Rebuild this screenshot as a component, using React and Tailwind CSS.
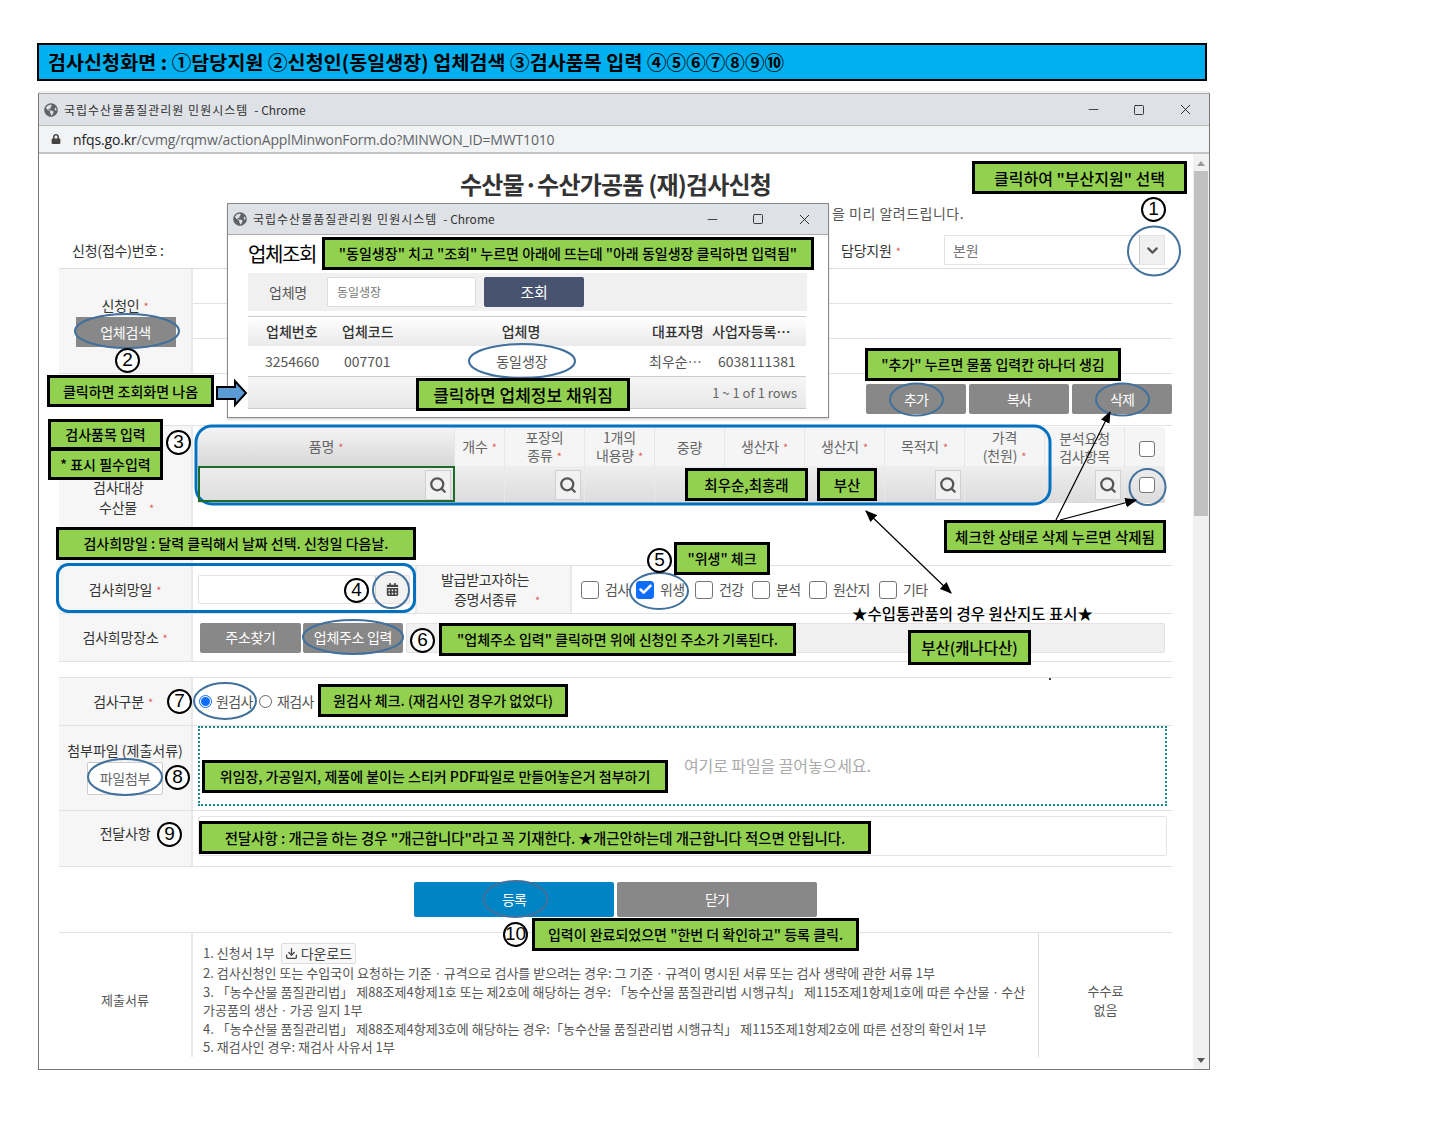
import React from 'react';
import { Search, ChevronDown, Check, Minus, X, Square, Download } from 'lucide-react';
import { FaGlobeAmericas, FaLock, FaCalendarAlt } from 'react-icons/fa';

const Req = () => <span className="ml-1 text-[11px] text-[#e0605a]">*</span>;

// green note boxes laid over the form
const Note = ({ className, children }) => (
  <div className={`absolute flex items-center justify-center whitespace-nowrap border-[3px] border-black bg-[#92d050] font-medium tracking-normal text-black ${className}`}>
    {children}
  </div>
);

// circled step number
const Num = ({ className, children }) => (
  <div className={`absolute flex h-[25px] w-[25px] items-center justify-center rounded-full border-2 border-black bg-white font-['Liberation_Sans',sans-serif] text-[19px] tracking-normal text-black ${className}`}>
    {children}
  </div>
);

const Label = ({ className = '', children }) => (
  <div className={`flex w-[134px] shrink-0 flex-col items-center justify-center border-r-2 border-[#e8e8e8] bg-[#f6f6f6] text-center text-[14px] tracking-[-0.2px] text-[#333] ${className}`}>
    {children}
  </div>
);

const SearchBtn = ({ className = '' }) => (
  <div className={`flex h-[30px] w-[26px] items-center justify-center border border-[#d0d0d0] bg-[#f1f1f1] ${className}`}>
    <Search size={18} strokeWidth={3} className="text-[#555]" />
  </div>
);

const Box = ({ checked, className = 'h-[18px] w-[18px]' }) => (
  <div className={`flex shrink-0 items-center justify-center rounded-[3px] border ${className} ${checked ? 'border-[#0d6efd] bg-[#0d6efd]' : 'border-[#777] bg-white'}`}>
    {checked && <Check size={15} strokeWidth={4} className="text-white" />}
  </div>
);

const WinButtons = ({ gap }) => (
  <div className={`flex items-center text-[#111] ${gap}`}>
    <Minus size={15} strokeWidth={1.2} />
    <Square size={12} strokeWidth={1.6} />
    <X size={17} strokeWidth={1.2} />
  </div>
);

const WinTitle = () => (
  <div className="flex items-center gap-[6px] text-[12px] text-[#333]">
    <FaGlobeAmericas size={14} className="text-[#5f6368]" />
    <span className="tracking-[1px]">국립수산물품질관리원 민원시스템</span>
    <span className="tracking-[0px]">- Chrome</span>
  </div>
);

const columns = [
  { w: 'w-[257px]', text: <>품명<Req /></>, bg: 'bg-gradient-to-b from-[#f4f4f4] to-[#d8d8d8]', search: 'last' },
  { w: 'w-[50px]', text: <>개수<Req /></> },
  { w: 'w-[80px]', text: <>포장의<br />종류<Req /></>, search: 'last' },
  { w: 'w-[70px]', text: <>1개의<br />내용량<Req /></> },
  { w: 'w-[70px]', text: '중량' },
  { w: 'w-[80px]', text: <>생산자<Req /></> },
  { w: 'w-[80px]', text: <>생산지<Req /></> },
  { w: 'w-[80px]', text: <>목적지<Req /></>, search: 'last' },
  { w: 'w-[80px]', text: <>가격<br />(천원)<Req /></> },
  { w: 'w-[80px]', text: <>분석요청<br />검사항목</>, search: 'last' },
];

const certs = [
  { name: '검사', w: 'w-[55px]' },
  { name: '위생', w: 'w-[59px]', checked: true },
  { name: '건강', w: 'w-[57px]' },
  { name: '분석', w: 'w-[57px]' },
  { name: '원산지', w: 'w-[70px]' },
  { name: '기타', w: 'w-[60px]' },
];

const App = () => {
  return (
    <div className="relative h-[1148px] w-[1437px] overflow-hidden bg-white pt-[43px] font-['Noto_Sans_CJK_KR',sans-serif] tracking-[-1px] text-[#333]">
      {/* heading bar */}
      <div className="ml-[37px] flex h-[38px] w-[1170px] items-center border-2 border-black bg-[#00b0f0] pl-[9px] text-[19.5px] font-bold tracking-[0.1px] whitespace-nowrap text-black">
        검사신청화면 : ①담당지원 ②신청인(동일생장) 업체검색 ③검사품목 입력 ④⑤⑥⑦⑧⑨⑩
      </div>

      {/* browser window */}
      <div className="mt-[12px] ml-[38px] flex h-[977px] w-[1172px] flex-col border border-[#777] border-t-[#aaa] bg-white shadow-[0_-2px_0_#eeeeee]">
        <div className="flex h-[32px] shrink-0 items-center justify-between border-b border-[#bbb] bg-[#dee1e6] pr-[15px] pl-[5px]">
          <WinTitle />
          <WinButtons gap="gap-[32px]" />
        </div>
        <div className="flex h-[28px] shrink-0 items-center gap-[12px] border-b-2 border-[#c4c4c4] bg-[#f1f3f4] pl-[12px] font-['Open_Sans',sans-serif] text-[14px] tracking-[-0.15px] text-[#5f6368]">
          <FaLock size={10} className="text-[#444]" />
          <span><span className="text-[#222]">nfqs.go.kr</span>/cvmg/rqmw/actionApplMinwonForm.do?MINWON_ID=MWT1010</span>
        </div>

        <div className="flex min-h-0 flex-1">
          <div className="flex w-[1154px] flex-col pr-[21px] pl-[20px]">
            <div className="flex h-[46px] shrink-0 items-end justify-center text-[24px] leading-[32px] font-semibold tracking-[-0.8px] text-[#333]">
              수산물·수산가공품 (재)검사신청
            </div>
            <div className="h-[32px] shrink-0 pt-[1px] pl-[773px] text-[14px] leading-[24px] tracking-[0.5px] text-[#555]">
              을 미리 알려드립니다.
            </div>
            <div className="flex h-[36px] shrink-0 items-center text-[14px] tracking-[-0.2px] text-[#333]">
              <div className="w-[782px] pl-[13px]">신청(접수)번호 :</div>
              <div className="w-[103px]">담당지원<Req /></div>
              <div className="flex h-[30px] w-[221px] items-center justify-between border border-[#e8e0e4] pl-[8px] text-[#777]">
                본원
                <div className="flex h-full w-[25px] items-center justify-center border-l border-[#ccc] bg-[#f0f0f0]">
                  <ChevronDown size={17} strokeWidth={3} className="text-[#555]" />
                </div>
              </div>
            </div>

            {/* applicant */}
            <div className="flex h-[105px] shrink-0 border-t border-[#ddd]">
              <Label className="justify-start pt-[26px]">
                <div className="h-[22px]">신청인<Req /></div>
                <div className="ml-[1px] flex h-[30px] w-[100px] items-center justify-center bg-[#888] text-white">업체검색</div>
              </Label>
              <div className="flex flex-1 flex-col">
                <div className="h-[35px] border-b border-[#e2e2e2]" />
                <div className="h-[35px] border-b border-[#e2e2e2]" />
                <div className="flex-1" />
              </div>
            </div>

            <div className="flex h-[52px] shrink-0 justify-end gap-[3px] border-t border-[#e2e2e2] pt-[10px] text-[14px] text-white">
              <div className="flex h-[30px] w-[100px] items-center justify-center rounded-[2px] bg-[#888]">추가</div>
              <div className="flex h-[30px] w-[100px] items-center justify-center rounded-[2px] bg-[#888]">복사</div>
              <div className="flex h-[30px] w-[100px] items-center justify-center rounded-[2px] bg-[#888]">삭제</div>
            </div>

            {/* inspected goods table */}
            <div className="flex h-[140px] shrink-0 border-t border-[#e2e2e2]">
              <Label className="items-start justify-end pb-[47px] pl-[34px] text-left leading-[20px]">
                <div>검사대상</div>
                <div className="pl-[6px]">수산물<span className="ml-3 text-[11px] text-[#e0605a]">*</span></div>
              </Label>
              <div className="w-[972px] pt-[1px] pl-[5px]">
                <div className="flex h-[39px] text-[14px] leading-[18px] tracking-[-0.2px] text-[#666]">
                  {columns.map((col, i) => (
                    <div key={i} className={`flex items-center justify-center border-r border-[#e6e6e6] text-center ${col.w} ${col.bg || 'bg-[#f5f5f5]'}`}>
                      <div>{col.text}</div>
                    </div>
                  ))}
                  <div className="flex w-[40px] items-center justify-center bg-[#f5f5f5] pt-[4px] pl-[4px]"><Box className="h-[16px] w-[16px]" /></div>
                </div>
                <div className="flex h-[37px] bg-gradient-to-b from-[#eeeeee] to-[#dcdcdc]">
                  {columns.map((col, i) => (
                    <div key={i} className={`flex items-center justify-end border-r border-[#e9e9e9] pr-[3px] ${col.w}`}>
                      {col.search && <SearchBtn />}
                    </div>
                  ))}
                  <div className="flex w-[40px] items-center justify-center pl-[4px]"><Box className="h-[16px] w-[16px]" /></div>
                </div>
              </div>
            </div>

            {/* desired date + certificate */}
            <div className="flex h-[48px] shrink-0 border-t border-[#e2e2e2]">
              <Label>
                <div>검사희망일<Req /></div>
              </Label>
              <div className="flex w-[222px] items-center pl-[5px]">
                <div className="flex h-[29px] w-[212px] justify-end rounded-[2px] border border-[#e8e0e4]">
                  <div className="flex w-[34px] items-center justify-center border-l border-[#ccc] bg-[#f2f2f2]">
                    <FaCalendarAlt size={13} className="text-[#444]" />
                  </div>
                </div>
              </div>
              <div className="flex w-[157px] flex-col justify-center gap-[2px] border-x-2 border-[#e8e8e8] bg-[#f6f6f6] pl-[24px] text-[14px] leading-[18px] tracking-[-0.3px]">
                <div>발급받고자하는</div>
                <div className="pl-[13px]">증명서종류<span className="ml-[18px] text-[11px] text-[#e0605a]">*</span></div>
              </div>
              <div className="flex flex-1 items-center pl-[9px] text-[14px] tracking-[-0.6px] text-[#555]">
                {certs.map((c) => (
                  <div key={c.name} className={`flex items-center gap-[6px] ${c.w}`}>
                    <Box checked={c.checked} />
                    <span>{c.name}</span>
                  </div>
                ))}
              </div>
            </div>

            {/* desired place */}
            <div className="flex h-[49px] shrink-0 border-y border-[#e2e2e2]">
              <Label>
                <div>검사희망장소<Req /></div>
              </Label>
              <div className="flex flex-1 items-center gap-[2px] pl-[7px] text-[14px] text-white">
                <div className="flex h-[30px] w-[101px] items-center justify-center rounded-[2px] bg-[#888] tracking-[-0.3px]">주소찾기</div>
                <div className="flex h-[30px] w-[100px] items-center justify-center rounded-[2px] bg-[#888] tracking-[-0.3px]">업체주소 입력</div>
                <div className="ml-[1px] h-[30px] w-[759px] rounded-[2px] border border-[#e8e0e4] bg-[#f0f0f0]" />
              </div>
            </div>
            <div className="h-[15px] shrink-0" />

            {/* inspection type */}
            <div className="flex h-[48px] shrink-0 border-t border-[#e2e2e2]">
              <Label className="pr-[4px]">
                <div>검사구분<Req /></div>
              </Label>
              <div className="flex items-center pl-[6px] text-[14px] tracking-[-0.6px] text-[#555]">
                <div className="flex h-[13px] w-[13px] items-center justify-center rounded-full border border-[#0d6efd]">
                  <div className="h-[9px] w-[9px] rounded-full bg-[#0d6efd]" />
                </div>
                <span className="ml-[4px] w-[43px]">원검사</span>
                <div className="h-[13px] w-[13px] rounded-full border border-[#666]" />
                <span className="ml-[5px]">재검사</span>
              </div>
            </div>

            {/* attachments */}
            <div className="flex h-[85px] shrink-0 border-t border-[#e2e2e2]">
              <Label className="justify-start pt-[14px]">
                <div className="leading-[20px] tracking-[0px]">첨부파일 (제출서류)</div>
                <div className="mt-[2px] flex h-[33px] w-[76px] items-center justify-center rounded-[2px] border border-[#ccc] bg-white text-[#666]">파일첨부</div>
              </Label>
              <div className="flex-1 pl-[5px]">
                <div className="flex h-[80px] w-[969px] items-center border-2 border-dotted border-[#1c8a92] pb-[3px] pl-[484px] text-[16px] tracking-[-0.1px] text-[#aaa]">
                  여기로 파일을 끌어놓으세요.
                </div>
              </div>
            </div>

            {/* message */}
            <div className="flex h-[56px] shrink-0 border-t border-[#e2e2e2]">
              <Label className="justify-start pt-[12px]">
                <div>전달사항</div>
              </Label>
              <div className="flex-1 pt-[5px] pl-[5px]">
                <div className="h-[40px] w-[969px] rounded-[3px] border border-[#e8e0e4]" />
              </div>
            </div>

            <div className="flex h-[66px] shrink-0 justify-center gap-[3px] border-t border-[#e2e2e2] pt-[15px] text-[14px] text-white">
              <div className="flex h-[35px] w-[200px] items-center justify-center rounded-[2px] bg-[#0084c4]">등록</div>
              <div className="flex h-[35px] w-[200px] items-center justify-center rounded-[2px] bg-[#888]">닫기</div>
            </div>

            {/* documents */}
            <div className="flex h-[125px] shrink-0 overflow-hidden border-t border-[#e2e2e2] text-[13px] tracking-[0px] text-[#555]">
              <div className="flex w-[134px] items-center justify-center border-r-2 border-[#e8e8e8] pt-[10px]">제출서류</div>
              <div className="w-[845px] pt-[10px] pl-[10px] leading-[18.6px] whitespace-nowrap">
                <div className="flex items-center gap-[6px]">
                  1. 신청서 1부
                  <span className="flex h-[21px] items-center gap-[3px] rounded-[2px] border border-[#ddd] bg-[#f8f8f8] px-[3px] text-[14px] text-[#444]">
                    <Download size={13} strokeWidth={2.5} className="text-[#444]" />다운로드
                  </span>
                </div>
                <div>2. 검사신청인 또는 수입국이 요청하는 기준ㆍ규격으로 검사를 받으려는 경우: 그 기준ㆍ규격이 명시된 서류 또는 검사 생략에 관한 서류 1부</div>
                <div>3. 「농수산물 품질관리법」 제88조제4항제1호 또는 제2호에 해당하는 경우: 「농수산물 품질관리법 시행규칙」 제115조제1항제1호에 따른 수산물ㆍ수산</div>
                <div>가공품의 생산ㆍ가공 일지 1부</div>
                <div>4. 「농수산물 품질관리법」 제88조제4항제3호에 해당하는 경우:「농수산물 품질관리법 시행규칙」 제115조제1항제2호에 따른 선장의 확인서 1부</div>
                <div>5. 재검사인 경우: 재검사 사유서 1부</div>
              </div>
              <div className="flex flex-1 flex-col items-center justify-center gap-[1px] border-l border-[#ddd] pt-[10px] leading-[18px]">
                <div>수수료</div>
                <div>없음</div>
              </div>
            </div>
          </div>

          {/* scrollbar */}
          <div className="flex w-[16px] flex-col items-center bg-[#f1f1f1]">
            <div className="mt-[7px] h-0 w-0 border-x-[4px] border-b-[5px] border-x-transparent border-b-[#999]" />
            <div className="mt-[5px] h-[345px] w-[14px] bg-[#c1c1c1]" />
            <div className="mt-auto mb-[6px] h-0 w-0 border-x-[4px] border-t-[5px] border-x-transparent border-t-[#555]" />
          </div>
        </div>
      </div>

      {/* company lookup popup */}
      <div className="absolute top-[203px] left-[227px] flex h-[215px] w-[602px] flex-col border border-[#888] bg-white shadow-[0_2px_2px_rgba(0,0,0,0.15)]">
        <div className="flex h-[31px] shrink-0 items-center justify-between border-b border-[#aaa] bg-[#dee1e6] pr-[15px] pl-[5px]">
          <WinTitle />
          <WinButtons gap="gap-[32px]" />
        </div>
        <div className="pl-[20px] text-[20px] leading-[38px] tracking-[-1.4px] text-black">업체조회</div>
        <div className="ml-[20px] flex h-[38px] w-[559px] items-center bg-[#f0f0f0] text-[14px] tracking-[-0.2px] text-[#555]">
          <span className="w-[79px] pl-[21px]">업체명</span>
          <div className="flex h-[30px] w-[149px] items-center rounded-[2px] border border-[#ddd] bg-white pl-[9px] text-[12px] tracking-[0px] text-[#777]">동일생장</div>
          <div className="ml-[8px] flex h-[30px] w-[100px] items-center justify-center rounded-[2px] bg-[#47536f] text-[15px] text-white">조회</div>
        </div>
        <div className="mt-[5px] ml-[20px] w-[558px] text-[14px] tracking-[0px]">
          <div className="flex h-[30px] items-center border-t border-[#ccc] bg-gradient-to-b from-[#ffffff] to-[#eaeaea] font-medium text-[#333]">
            <span className="w-[94px] pl-[18px]">업체번호</span>
            <span className="w-[98px]">업체코드</span>
            <span className="w-[162px] text-center">업체명</span>
            <span className="w-[110px] pl-[50px] whitespace-nowrap">대표자명</span>
            <span className="whitespace-nowrap">사업자등록⋯</span>
          </div>
          <div className="flex h-[30px] items-center text-[#555]">
            <span className="w-[96px] pl-[17px]">3254660</span>
            <span className="w-[96px]">007701</span>
            <span className="w-[164px] text-center">동일생장</span>
            <span className="w-[114px] pl-[45px] whitespace-nowrap">최우순⋯</span>
            <span className="whitespace-nowrap">6038111381</span>
          </div>
          <div className="flex h-[33px] items-center justify-end border-y border-[#ccc] bg-gradient-to-b from-[#f6f6f6] to-[#e8e8e8] pr-[9px] text-[13px] text-[#666]">
            1 ~ 1 of 1 rows
          </div>
        </div>
      </div>

      {/* outlines, ellipses and arrows drawn on top of the capture */}
      <svg className="pointer-events-none absolute top-0 left-0 h-[1148px] w-[1437px]" viewBox="0 0 1437 1148" fill="none">
        <defs>
          <marker id="head" markerWidth="10" markerHeight="8" refX="9" refY="4" orient="auto-start-reverse">
            <path d="M0 0 L10 4 L0 8 Z" fill="#000" />
          </marker>
        </defs>
        <rect x="196" y="426" width="854" height="78" rx="16" stroke="#0070c0" strokeWidth="3" />
        <rect x="57.5" y="564.5" width="357" height="47" rx="11" stroke="#0070c0" strokeWidth="3" />
        <rect x="199" y="467" width="255" height="34" stroke="#1e6b2a" strokeWidth="2" />
        <g stroke="#41719c" strokeWidth="2">
          <ellipse cx="127" cy="331" rx="52" ry="17" />
          <ellipse cx="1154" cy="251" rx="26" ry="24.5" />
          <ellipse cx="522" cy="361" rx="53" ry="17" />
          <ellipse cx="916.5" cy="399.5" rx="26.5" ry="16" />
          <ellipse cx="1122.5" cy="399.5" rx="26.5" ry="16" />
          <ellipse cx="391" cy="590" rx="18" ry="18" />
          <ellipse cx="659" cy="591" rx="29" ry="18" />
          <ellipse cx="353" cy="637" rx="50" ry="17" />
          <ellipse cx="1147.5" cy="487" rx="18" ry="18" />
          <ellipse cx="225" cy="701" rx="31" ry="18" />
          <ellipse cx="125" cy="777" rx="37" ry="18" />
          <ellipse cx="515.5" cy="899" rx="32" ry="18" />
        </g>
        <polygon points="217,387 235,387 235,381 246,393 235,405 235,399 217,399" fill="#5b9bd5" stroke="#000" strokeWidth="2" />
        <g stroke="#000" strokeWidth="1.2">
          <line x1="866" y1="511" x2="951" y2="593" markerStart="url(#head)" markerEnd="url(#head)" />
          <line x1="1056" y1="520" x2="1110" y2="412" markerEnd="url(#head)" />
          <line x1="1060" y1="520" x2="1136" y2="500" markerEnd="url(#head)" />
        </g>
        <circle cx="1050" cy="679" r="1" fill="#000" />
      </svg>

      {/* notes */}
      <Note className="top-[161px] left-[972px] h-[33px] w-[215px] text-[16px]">클릭하여 "부산지원" 선택</Note>
      <Note className="top-[237px] left-[322px] h-[33px] w-[492px] text-[14px]">"동일생장" 치고 "조회" 누르면 아래에 뜨는데 "아래 동일생장 클릭하면 입력됨"</Note>
      <Note className="top-[375px] left-[47px] h-[32px] w-[167px] text-[14px]">클릭하면 조회화면 나옴</Note>
      <Note className="top-[378px] left-[416px] h-[33px] w-[214px] text-[17px]">클릭하면 업체정보 채워짐</Note>
      <Note className="top-[348px] left-[865px] h-[33px] w-[256px] text-[14px]">"추가" 누르면 물품 입력칸 하나더 생김</Note>
      <Note className="top-[419px] left-[48px] h-[31px] w-[115px] text-[14px]">검사품목 입력</Note>
      <Note className="top-[448px] left-[48px] h-[32px] w-[115px] text-[14px]">* 표시 필수입력</Note>
      <Note className="top-[468px] left-[685px] h-[33px] w-[123px] text-[14.5px]">최우순,최홍래</Note>
      <Note className="top-[468px] left-[817px] h-[33px] w-[60px] text-[14.5px]">부산</Note>
      <Note className="top-[520px] left-[944px] h-[33px] w-[222px] text-[14.5px]">체크한 상태로 삭제 누르면 삭제됨</Note>
      <Note className="top-[527px] left-[56px] h-[33px] w-[360px] text-[14px]">검사희망일 : 달력 클릭해서 날짜 선택. 신청일 다음날.</Note>
      <Note className="top-[542px] left-[674px] h-[33px] w-[96px] text-[14px]">"위생" 체크</Note>
      <Note className="top-[623px] left-[439px] h-[33px] w-[357px] text-[14px]">"업체주소 입력" 클릭하면 위에 신청인 주소가 기록된다.</Note>
      <Note className="top-[630px] left-[908px] h-[35px] w-[123px] text-[15.5px]">부산(캐나다산)</Note>
      <Note className="top-[684px] left-[318px] h-[33px] w-[250px] text-[14px]">원검사 체크. (재검사인 경우가 없었다)</Note>
      <Note className="top-[760px] left-[202px] h-[33px] w-[466px] text-[14px]">위임장, 가공일지, 제품에 붙이는 스티커 PDF파일로 만들어놓은거 첨부하기</Note>
      <Note className="top-[821px] left-[199px] h-[33px] w-[672px] text-[14.4px]">전달사항 : 개근을 하는 경우 "개근합니다"라고 꼭 기재한다. ★개근안하는데 개근합니다 적으면 안됩니다.</Note>
      <Note className="top-[918px] left-[532px] h-[33px] w-[327px] text-[14px]">입력이 완료되었으면 "한번 더 확인하고" 등록 클릭.</Note>

      <div className="absolute top-[602px] left-[852px] text-[15.5px] leading-[22px] font-medium tracking-[0px] text-black">★수입통관품의 경우 원산지도 표시★</div>

      <Num className="top-[197px] left-[1141px]">1</Num>
      <Num className="top-[348px] left-[115px]">2</Num>
      <Num className="top-[430px] left-[166px]">3</Num>
      <Num className="top-[578px] left-[344px]">4</Num>
      <Num className="top-[548px] left-[647px]">5</Num>
      <Num className="top-[628px] left-[410px]">6</Num>
      <Num className="top-[689px] left-[167px]">7</Num>
      <Num className="top-[765px] left-[165px]">8</Num>
      <Num className="top-[822px] left-[157px]">9</Num>
      <Num className="top-[922px] left-[503px] text-[15px]">10</Num>
    </div>
  );
};

export default App;
